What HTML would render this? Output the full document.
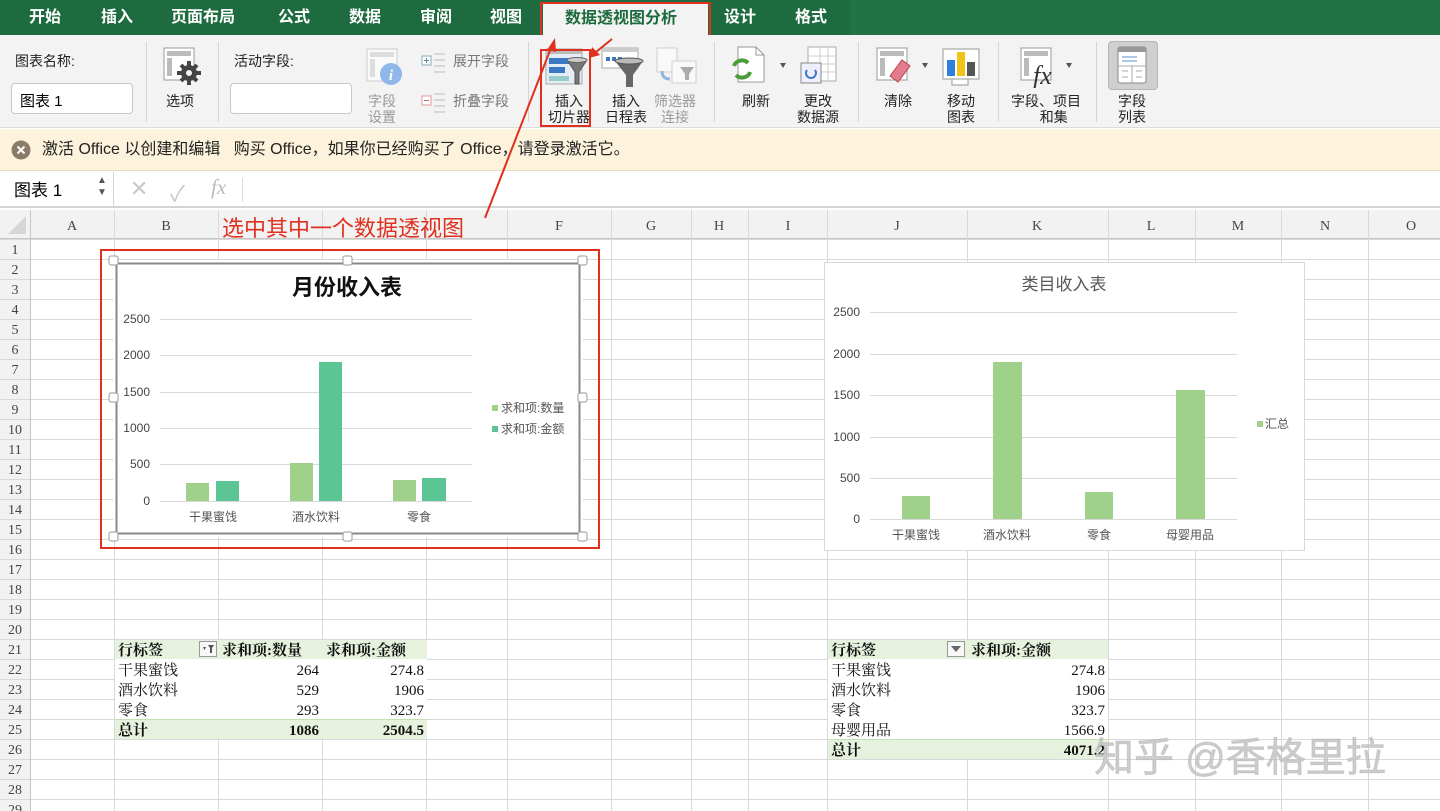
<!DOCTYPE html>
<html><head><meta charset="utf-8">
<style>
*{margin:0;padding:0;box-sizing:border-box}
body{width:1440px;height:811px;overflow:hidden;background:#fff;font-family:"Liberation Sans","Noto Sans CJK SC",sans-serif;position:relative}
.a{position:absolute}
.tab{position:absolute;top:0;height:35px;line-height:35px;color:#fff;font-size:16px;font-weight:bold}
.lbl{position:absolute;font-size:14px;color:#222;text-align:center;line-height:16px;white-space:nowrap}
.g{color:#9a9a9a}
.sep{position:absolute;top:42px;width:1px;height:80px;background:#d4d4d4}
</style></head><body>
<div class="a" style="left:0;top:0;width:1440px;height:35px;background:#217346"></div>
<div class="a" style="left:0;top:0;width:850px;height:35px;background:#1d6b3f"></div>
<div class="tab" style="left:29px">开始</div>
<div class="tab" style="left:101px">插入</div>
<div class="tab" style="left:171px">页面布局</div>
<div class="tab" style="left:278px">公式</div>
<div class="tab" style="left:349px">数据</div>
<div class="tab" style="left:420px">审阅</div>
<div class="tab" style="left:490px">视图</div>
<div class="a" style="left:543px;top:4px;width:165px;height:33px;background:#f3f3f3"></div>
<div class="tab" style="left:565px;color:#1d6b3f;top:1px">数据透视图分析</div>
<div class="a" style="left:540px;top:2px;width:171px;height:36px;border:2px solid #e0301e"></div>
<div class="tab" style="left:724px">设计</div>
<div class="tab" style="left:795px">格式</div>
<div class="a" style="left:0;top:35px;width:1440px;height:93px;background:#f3f3f3;border-bottom:1px solid #dcdcdc"></div>
<div class="lbl" style="left:15px;top:53px">图表名称:</div>
<div class="a" style="left:11px;top:83px;width:122px;height:31px;background:#fff;border:1px solid #c8c8c8;border-radius:4px;font-size:15px;padding:6px 8px">图表 1</div>
<div class="sep" style="left:146px"></div>
<svg class="a" style="left:163px;top:47px" width="40" height="40" viewBox="0 0 40 40"><rect x="1" y="1" width="30" height="32" fill="#fff" stroke="#999"/><rect x="4" y="4" width="24" height="5" fill="#bbb"/><rect x="4" y="11" width="5" height="18" fill="#bbb"/><circle cx="26" cy="26" r="8" fill="#444"/><g stroke="#444" stroke-width="4"><line x1="26" y1="14" x2="26" y2="38"/><line x1="14" y1="26" x2="38" y2="26"/><line x1="18" y1="18" x2="34" y2="34"/><line x1="34" y1="18" x2="18" y2="34"/></g><circle cx="26" cy="26" r="3" fill="#f3f3f3"/></svg>
<div class="lbl" style="left:166px;top:93px">选项</div>
<div class="sep" style="left:218px"></div>
<div class="lbl" style="left:234px;top:53px">活动字段:</div>
<div class="a" style="left:230px;top:83px;width:122px;height:31px;background:#fff;border:1px solid #c8c8c8;border-radius:4px"></div>
<svg class="a" style="left:366px;top:48px" width="40" height="38"><rect x="1" y="1" width="30" height="32" fill="#fafafa" stroke="#ccc"/><rect x="4" y="4" width="24" height="5" fill="#ddd"/><rect x="4" y="11" width="5" height="18" fill="#ddd"/><circle cx="25" cy="26" r="11" fill="#8fb8e8"/><text x="25" y="32" font-size="15" fill="#fff" text-anchor="middle" font-family="Liberation Serif" font-style="italic" font-weight="bold">i</text></svg>
<div class="lbl g" style="left:368px;top:93px">字段<br>设置</div>
<svg class="a" style="left:421px;top:52px" width="26" height="22"><rect x="1" y="4" width="9" height="9" fill="#fff" stroke="#8ab"/><line x1="3" y1="8.5" x2="8" y2="8.5" stroke="#58a"/><line x1="5.5" y1="6" x2="5.5" y2="11" stroke="#58a"/><g stroke="#bbb"><line x1="13" y1="2" x2="24" y2="2"/><line x1="13" y1="8" x2="24" y2="8"/><line x1="13" y1="14" x2="24" y2="14"/><line x1="13" y1="20" x2="24" y2="20"/></g></svg>
<div class="lbl g" style="left:453px;top:53px;color:#777">展开字段</div>
<svg class="a" style="left:421px;top:92px" width="26" height="22"><rect x="1" y="4" width="9" height="9" fill="#fff" stroke="#d99"/><line x1="3" y1="8.5" x2="8" y2="8.5" stroke="#c66"/><g stroke="#bbb"><line x1="13" y1="2" x2="24" y2="2"/><line x1="13" y1="8" x2="24" y2="8"/><line x1="13" y1="14" x2="24" y2="14"/><line x1="13" y1="20" x2="24" y2="20"/></g></svg>
<div class="lbl g" style="left:453px;top:93px;color:#777">折叠字段</div>
<div class="sep" style="left:528px"></div>
<svg class="a" style="left:545px;top:48px" width="44" height="40"><rect x="1" y="1" width="36" height="35" fill="#e4ecf6" stroke="#aaa"/><rect x="1" y="1" width="36" height="5" fill="#bbb"/><rect x="4" y="10" width="20" height="6" fill="#3a78c4"/><rect x="4" y="19" width="16" height="6" fill="#3a78c4"/><rect x="4" y="28" width="20" height="5" fill="#9cc"/><path d="M22 12 L42 12 L34 24 L34 36 L30 36 L30 24 Z" fill="#777" stroke="#555"/><ellipse cx="32" cy="12" rx="10" ry="2.5" fill="#ccc" stroke="#666"/></svg>
<div class="lbl" style="left:548px;top:93px">插入<br>切片器</div>
<div class="a" style="left:540px;top:49px;width:51px;height:78px;border:2px solid #e0301e"></div>
<svg class="a" style="left:601px;top:47px" width="44" height="42"><rect x="1" y="1" width="36" height="20" fill="#fff" stroke="#aaa"/><rect x="1" y="1" width="36" height="4" fill="#ccc"/><g fill="#3a78c4"><rect x="5" y="10" width="4" height="4"/><rect x="11" y="10" width="4" height="4"/><rect x="17" y="10" width="4" height="4"/></g><path d="M14 14 L42 14 L32 28 L32 40 L25 40 L25 28 Z" fill="#666"/><ellipse cx="28" cy="14" rx="14" ry="3" fill="#bbb" stroke="#555"/></svg>
<div class="lbl" style="left:605px;top:93px">插入<br>日程表</div>
<svg class="a" style="left:656px;top:47px" width="42" height="40" opacity=".5"><rect x="1" y="1" width="20" height="24" fill="#fff" stroke="#aaa"/><rect x="16" y="14" width="24" height="22" fill="#fff" stroke="#aaa"/><path d="M24 20 L38 20 L33 27 L33 33 L29 33 L29 27 Z" fill="#666"/><path d="M6 24 Q6 32 14 32" stroke="#3a78c4" stroke-width="3" fill="none"/></svg>
<div class="lbl g" style="left:654px;top:93px">筛选器<br>连接</div>
<div class="sep" style="left:714px"></div>
<svg class="a" style="left:728px;top:46px" width="62" height="40"><path d="M10 1 L28 1 L36 9 L36 36 L10 36 Z" fill="#fff" stroke="#999"/><path d="M28 1 L28 9 L36 9" fill="none" stroke="#999"/><path d="M6 20 A8 7 0 0 1 20 17" stroke="#4a9e3a" stroke-width="4" fill="none"/><path d="M22 26 A8 7 0 0 1 8 29" stroke="#4a9e3a" stroke-width="4" fill="none"/><path d="M52 17 L58 17 L55 22 Z" fill="#555"/></svg>
<div class="lbl" style="left:742px;top:93px">刷新</div>
<svg class="a" style="left:798px;top:46px" width="42" height="40"><rect x="10" y="1" width="28" height="34" fill="#fff" stroke="#aaa"/><g stroke="#ccc"><line x1="10" y1="10" x2="38" y2="10"/><line x1="10" y1="18" x2="38" y2="18"/><line x1="10" y1="26" x2="38" y2="26"/><line x1="22" y1="1" x2="22" y2="35"/><line x1="30" y1="1" x2="30" y2="35"/></g><rect x="3" y="17" width="20" height="20" fill="#eef" stroke="#888"/><path d="M9 24 A5 5 0 1 0 17 24" stroke="#3a78c4" stroke-width="2" fill="none"/></svg>
<div class="lbl" style="left:797px;top:93px">更改<br>数据源</div>
<div class="sep" style="left:858px"></div>
<svg class="a" style="left:876px;top:46px" width="54" height="40"><rect x="1" y="2" width="30" height="32" fill="#fff" stroke="#999"/><rect x="4" y="5" width="24" height="5" fill="#bbb"/><rect x="4" y="12" width="5" height="18" fill="#bbb"/><path d="M14 30 L26 14 L34 20 L22 36 Z" fill="#e57b8e" stroke="#b44"/><path d="M46 17 L52 17 L49 22 Z" fill="#555"/></svg>
<div class="lbl" style="left:884px;top:93px">清除</div>
<svg class="a" style="left:942px;top:48px" width="40" height="40"><rect x="1" y="1" width="36" height="30" fill="#fff" stroke="#999"/><rect x="5" y="12" width="8" height="16" fill="#2f7fdc"/><rect x="15" y="4" width="8" height="24" fill="#f2c318"/><rect x="25" y="14" width="8" height="14" fill="#555"/><rect x="10" y="31" width="16" height="6" fill="#fff" stroke="#999"/></svg>
<div class="lbl" style="left:947px;top:93px">移动<br>图表</div>
<div class="sep" style="left:998px"></div>
<svg class="a" style="left:1020px;top:46px" width="56" height="42"><rect x="1" y="2" width="30" height="32" fill="#fff" stroke="#999"/><rect x="4" y="5" width="24" height="5" fill="#bbb"/><rect x="4" y="12" width="5" height="18" fill="#bbb"/><text x="13" y="38" font-family="Liberation Serif" font-style="italic" font-size="26" fill="#333">fx</text><path d="M46 17 L52 17 L49 22 Z" fill="#555"/></svg>
<div class="lbl" style="left:1011px;top:93px">字段、项目<br>&nbsp;&nbsp;&nbsp;&nbsp;和集</div>
<div class="sep" style="left:1096px"></div>
<div class="a" style="left:1108px;top:41px;width:50px;height:49px;background:#cfcfcf;border:1px solid #b5b5b5;border-radius:4px"></div>
<svg class="a" style="left:1117px;top:46px" width="32" height="40"><rect x="1" y="1" width="28" height="36" fill="#fff" stroke="#888" rx="2"/><rect x="1" y="1" width="28" height="5" fill="#999"/><g stroke="#5a8fd0"><line x1="5" y1="11" x2="20" y2="11"/><line x1="5" y1="15" x2="20" y2="15"/></g><line x1="1" y1="20" x2="29" y2="20" stroke="#aaa"/><line x1="15" y1="20" x2="15" y2="37" stroke="#aaa"/><g stroke="#aaa"><line x1="5" y1="25" x2="11" y2="25"/><line x1="19" y1="25" x2="25" y2="25"/><line x1="5" y1="31" x2="11" y2="31"/><line x1="19" y1="31" x2="25" y2="31"/></g></svg>
<div class="lbl" style="left:1118px;top:93px">字段<br>列表</div>
<div class="a" style="left:0;top:129px;width:1440px;height:42px;background:#fdf3dc;border-bottom:1px solid #e8dcc0"></div>
<svg class="a" style="left:11px;top:140px" width="20" height="20"><circle cx="10" cy="10" r="9.5" fill="#8a7b66"/><path d="M6.5 6.5 L13.5 13.5 M13.5 6.5 L6.5 13.5" stroke="#fff" stroke-width="2"/></svg>
<div class="a" style="left:42px;top:139px;font-size:16px;color:#222;white-space:nowrap;line-height:22px">激活 Office 以创建和编辑&nbsp;&nbsp;&nbsp;购买 Office，如果你已经购买了 Office，请登录激活它。</div>
<div class="a" style="left:0;top:172px;width:1440px;height:36px;background:#fff;border-bottom:2px solid #d4d4d4"></div>
<div class="a" style="left:0;top:172px;width:114px;height:34px;border-right:1px solid #d4d4d4;font-size:17px;padding:4px 0 0 14px">图表 1</div>
<div class="a" style="left:97px;top:175px;font-size:10px;color:#555;line-height:12px">▲<br>▼</div>
<div class="a" style="left:130px;top:176px;font-size:22px;color:#c8c8c8">✕</div>
<div class="a" style="left:170px;top:176px;font-size:22px;color:#c8c8c8">✓</div>
<div class="a" style="left:211px;top:175px;font-size:21px;color:#bbb;font-family:'Liberation Serif';font-style:italic">fx</div>
<div class="a" style="left:242px;top:178px;width:1px;height:24px;background:#ddd"></div>
<svg class="a" style="left:0;top:0" width="1440" height="811">
<defs><pattern id="rows" x="0" y="239" width="1440" height="20" patternUnits="userSpaceOnUse"><line x1="0" y1="0.5" x2="1440" y2="0.5" stroke="#d9d9d9"/></pattern></defs>
<rect x="0" y="210" width="1440" height="29" fill="#f2f2f2"/>
<rect x="0" y="239" width="30" height="572" fill="#f2f2f2"/>
<rect x="30" y="239" width="1410" height="572" fill="url(#rows)"/>
<rect x="0" y="239" width="30" height="572" fill="url(#rows)"/>
<line x1="0" y1="238.5" x2="1440" y2="238.5" stroke="#c6c6c6"/>
<line x1="30.5" y1="210" x2="30.5" y2="811" stroke="#c6c6c6"/>
<path d="M26 234 L26 216 L8 234 Z" fill="#d6d6d6"/>
<g stroke="#d9d9d9"><line x1="114.5" y1="210" x2="114.5" y2="811"/><line x1="218.5" y1="210" x2="218.5" y2="811"/><line x1="322.5" y1="210" x2="322.5" y2="811"/><line x1="426.5" y1="210" x2="426.5" y2="811"/><line x1="507.5" y1="210" x2="507.5" y2="811"/><line x1="611.5" y1="210" x2="611.5" y2="811"/><line x1="691.5" y1="210" x2="691.5" y2="811"/><line x1="748.5" y1="210" x2="748.5" y2="811"/><line x1="827.5" y1="210" x2="827.5" y2="811"/><line x1="967.5" y1="210" x2="967.5" y2="811"/><line x1="1108.5" y1="210" x2="1108.5" y2="811"/><line x1="1195.5" y1="210" x2="1195.5" y2="811"/><line x1="1281.5" y1="210" x2="1281.5" y2="811"/><line x1="1368.5" y1="210" x2="1368.5" y2="811"/></g>
<g font-family="Liberation Serif" font-size="14" fill="#444" text-anchor="middle">
<text x="72" y="230">A</text><text x="166" y="230">B</text><text x="559" y="230">F</text><text x="651" y="230">G</text><text x="719" y="230">H</text><text x="788" y="230">I</text><text x="897" y="230">J</text><text x="1037" y="230">K</text><text x="1151" y="230">L</text><text x="1238" y="230">M</text><text x="1325" y="230">N</text><text x="1411" y="230">O</text>
</g>
<g font-family="Liberation Serif" font-size="14" fill="#444" text-anchor="middle">
<text x="15" y="254">1</text><text x="15" y="274">2</text><text x="15" y="294">3</text><text x="15" y="314">4</text><text x="15" y="334">5</text><text x="15" y="354">6</text><text x="15" y="374">7</text><text x="15" y="394">8</text><text x="15" y="414">9</text><text x="15" y="434">10</text><text x="15" y="454">11</text><text x="15" y="474">12</text><text x="15" y="494">13</text><text x="15" y="514">14</text><text x="15" y="534">15</text><text x="15" y="554">16</text><text x="15" y="574">17</text><text x="15" y="594">18</text><text x="15" y="614">19</text><text x="15" y="634">20</text><text x="15" y="654">21</text><text x="15" y="674">22</text><text x="15" y="694">23</text><text x="15" y="714">24</text><text x="15" y="734">25</text><text x="15" y="754">26</text><text x="15" y="774">27</text><text x="15" y="794">28</text><text x="15" y="814">29</text>
</g>
<rect x="113" y="260" width="470" height="277" fill="#fff"/>
<rect x="116.5" y="263.5" width="463" height="270" fill="none" stroke="#888" stroke-width="2"/>
<rect x="101" y="250" width="498" height="298" fill="none" stroke="#e0301e" stroke-width="2"/>
<g fill="#fff" stroke="#999"><rect x="109" y="256" width="9" height="9" rx="2"/><rect x="343" y="256" width="9" height="9" rx="2"/><rect x="578" y="256" width="9" height="9" rx="2"/><rect x="109" y="393" width="9" height="9" rx="2"/><rect x="578" y="393" width="9" height="9" rx="2"/><rect x="109" y="532" width="9" height="9" rx="2"/><rect x="343" y="532" width="9" height="9" rx="2"/><rect x="578" y="532" width="9" height="9" rx="2"/></g>
<text x="347" y="295" font-size="22" font-weight="bold" text-anchor="middle" fill="#111">月份收入表</text>
<g stroke="#d9d9d9"><line x1="160" y1="319.5" x2="472" y2="319.5"/><line x1="160" y1="355.5" x2="472" y2="355.5"/><line x1="160" y1="392.5" x2="472" y2="392.5"/><line x1="160" y1="428.5" x2="472" y2="428.5"/><line x1="160" y1="464.5" x2="472" y2="464.5"/><line x1="160" y1="501.5" x2="472" y2="501.5"/></g>
<g font-size="12" fill="#444" text-anchor="end"><text x="150" y="323">2500</text><text x="150" y="359">2000</text><text x="150" y="396">1500</text><text x="150" y="432">1000</text><text x="150" y="468">500</text><text x="150" y="505">0</text></g>
<g fill="#9fd18a"><rect x="186" y="483" width="23" height="18"/><rect x="290" y="463" width="23" height="38"/><rect x="393" y="480" width="23" height="21"/></g>
<g fill="#5cc594"><rect x="216" y="481" width="23" height="20"/><rect x="319" y="362" width="23" height="139"/><rect x="422" y="478" width="24" height="23"/></g>
<g font-size="12" fill="#555" text-anchor="middle"><text x="213" y="521">干果蜜饯</text><text x="316" y="521">酒水饮料</text><text x="419" y="521">零食</text></g>
<rect x="492" y="405" width="6" height="6" fill="#9fd18a"/><text x="501" y="412" font-size="12" fill="#555">求和项:数量</text>
<rect x="492" y="426" width="6" height="6" fill="#5cc594"/><text x="501" y="433" font-size="12" fill="#555">求和项:金额</text>
<rect x="824.5" y="262.5" width="480" height="288" fill="#fff" stroke="#d9d9d9"/>
<text x="1064" y="290" font-size="17" text-anchor="middle" fill="#595959">类目收入表</text>
<g stroke="#d9d9d9"><line x1="870" y1="312.5" x2="1237" y2="312.5"/><line x1="870" y1="354.5" x2="1237" y2="354.5"/><line x1="870" y1="395.5" x2="1237" y2="395.5"/><line x1="870" y1="437.5" x2="1237" y2="437.5"/><line x1="870" y1="478.5" x2="1237" y2="478.5"/><line x1="870" y1="519.5" x2="1237" y2="519.5"/></g>
<g font-size="12" fill="#444" text-anchor="end"><text x="860" y="316">2500</text><text x="860" y="358">2000</text><text x="860" y="399">1500</text><text x="860" y="441">1000</text><text x="860" y="482">500</text><text x="860" y="523">0</text></g>
<g fill="#9fd18a"><rect x="902" y="496" width="28" height="23"/><rect x="993" y="362" width="29" height="157"/><rect x="1085" y="492" width="28" height="27"/><rect x="1176" y="390" width="29" height="129"/></g>
<g font-size="12" fill="#555" text-anchor="middle"><text x="916" y="539">干果蜜饯</text><text x="1007" y="539">酒水饮料</text><text x="1099" y="539">零食</text><text x="1190" y="539">母婴用品</text></g>
<rect x="1257" y="421" width="6" height="6" fill="#9fd18a"/><text x="1265" y="428" font-size="12" fill="#555">汇总</text>
<!-- table1 -->
<rect x="115" y="659" width="312" height="61" fill="#fff"/>
<rect x="115" y="640" width="312" height="19" fill="#e6f2de"/>
<rect x="115" y="720" width="312" height="19" fill="#e6f2de"/>
<line x1="115" y1="719.5" x2="427" y2="719.5" stroke="#c6e0b4"/>
<rect x="199.5" y="641.5" width="17" height="15" fill="#f7f7f7" stroke="#999"/><path d="M203 647 L206 647 L204.5 650 Z M208 645 L214 645 L212 648 L212 653 L210 653 L210 648 Z" fill="#555"/>
<g font-family="Liberation Serif,Noto Serif CJK SC,serif" font-size="15" fill="#111">
<text x="118" y="655" font-weight="bold">行标签</text><text x="222" y="655" font-weight="bold">求和项:数量</text><text x="326" y="655" font-weight="bold">求和项:金额</text>
<text x="118" y="675">干果蜜饯</text><text x="118" y="695">酒水饮料</text><text x="118" y="715">零食</text><text x="118" y="735" font-weight="bold">总计</text>
</g>
<g font-family="Liberation Serif" font-size="15" fill="#111" text-anchor="end">
<text x="319" y="675">264</text><text x="319" y="695">529</text><text x="319" y="715">293</text><text x="319" y="735" font-weight="bold">1086</text>
<text x="424" y="675">274.8</text><text x="424" y="695">1906</text><text x="424" y="715">323.7</text><text x="424" y="735" font-weight="bold">2504.5</text>
</g>
<!-- table2 -->
<rect x="828" y="659" width="280" height="81" fill="#fff"/>
<rect x="828" y="640" width="280" height="19" fill="#e6f2de"/>
<rect x="828" y="740" width="280" height="19" fill="#e6f2de"/>
<line x1="828" y1="739.5" x2="1108" y2="739.5" stroke="#c6e0b4"/>
<rect x="947.5" y="641.5" width="17" height="15" fill="#f7f7f7" stroke="#999"/><path d="M951 646 L961 646 L956 652 Z" fill="#666"/>
<g font-family="Liberation Serif,Noto Serif CJK SC,serif" font-size="15" fill="#111">
<text x="831" y="655" font-weight="bold">行标签</text><text x="971" y="655" font-weight="bold">求和项:金额</text>
<text x="831" y="675">干果蜜饯</text><text x="831" y="695">酒水饮料</text><text x="831" y="715">零食</text><text x="831" y="735">母婴用品</text><text x="831" y="755" font-weight="bold">总计</text>
</g>
<g font-family="Liberation Serif" font-size="15" fill="#111" text-anchor="end">
<text x="1105" y="675">274.8</text><text x="1105" y="695">1906</text><text x="1105" y="715">323.7</text><text x="1105" y="735">1566.9</text><text x="1105" y="755" font-weight="bold">4071.2</text>
</g>
<text x="1094" y="771" font-size="40" fill="#c4c4c4" fill-opacity=".85" stroke="#999" stroke-opacity=".3">知乎 @香格里拉</text>
<text x="222" y="236" font-size="22" fill="#e0301e">选中其中一个数据透视图</text>
<line x1="485" y1="218" x2="551" y2="48" stroke="#e0301e" stroke-width="2"/>
<path d="M555 38 L547 50 L556 52 Z" fill="#e0301e"/>
<line x1="612" y1="39" x2="596" y2="52" stroke="#e0301e" stroke-width="2"/>
<path d="M589 58 L592 47 L600 55 Z" fill="#e0301e"/>
</svg>
</body></html>
